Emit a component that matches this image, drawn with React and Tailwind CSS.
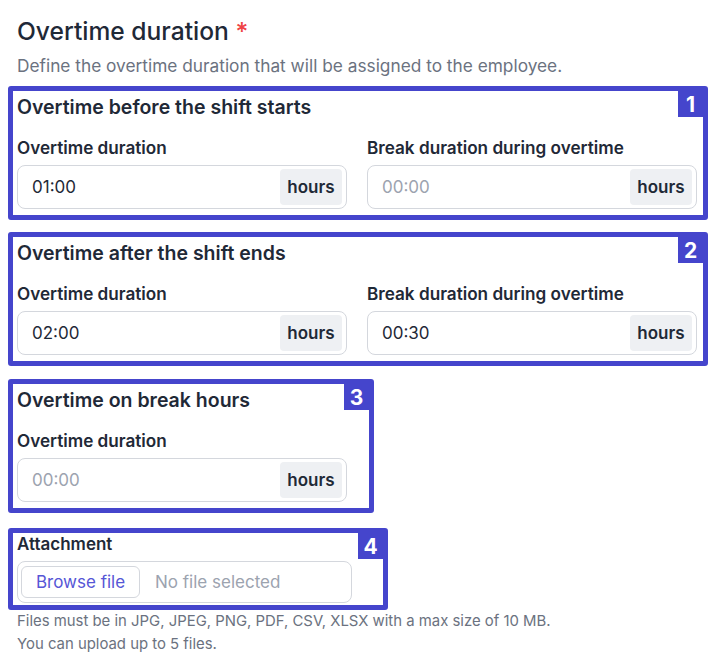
import React from "react";

const font = { fontFamily: "Inter, 'Noto Sans', sans-serif" };

function Badge({ n }) {
  return (
    <div className="absolute right-0 top-0 flex h-[26px] w-[25px] items-center justify-center bg-[#4545cc] text-[21px] font-bold leading-none text-white">
      {n}
    </div>
  );
}

function DurationInput({ value, placeholder }) {
  return (
    <div className="flex h-[44px] w-[330px] items-center rounded-lg border border-[#d4d7dd] bg-white pl-[14px] pr-[4px]">
      <span className={"flex-1 pt-[2px] text-[17px] " + (value ? "text-[#1f2937]" : "text-[#9ca3af]")}>
        {value || placeholder}
      </span>
      <span className="flex h-[36px] w-[62px] items-center justify-center rounded bg-[#eef0f3] pt-[2px] text-[17px] font-semibold text-[#1f2937]">
        hours
      </span>
    </div>
  );
}

function Field({ label, value, placeholder }) {
  return (
    <div className="flex flex-col">
      <div className="text-[17.15px] font-semibold leading-6 text-[#1f2937]">{label}</div>
      <div className="mt-[5px]">
        <DurationInput value={value} placeholder={placeholder} />
      </div>
    </div>
  );
}

function Section({ n, title, fields, className }) {
  return (
    <div className={"relative rounded-[3px] border-[5px] border-[#4545cc] pb-[6px] pl-[4px] pt-[4px] " + className}>
      <Badge n={n} />
      <div className="text-[19.5px] font-semibold leading-6 text-[#1f2937]">{title}</div>
      <div className="mt-[17px] flex gap-[20px]">
        {fields.map((f, i) => (
          <Field key={i} {...f} />
        ))}
      </div>
    </div>
  );
}

export default function App() {
  return (
    <div className="min-h-[667px] w-[719px] bg-white px-[8px] pt-[15px]" style={font}>
      <div className="pl-[9px]">
        <div className="text-[24.6px] font-medium leading-8 text-[#1f2937]">
          Overtime duration <span className="text-[#ef4444]">*</span>
        </div>
        <div className="mt-[7px] text-[17.3px] leading-6 text-[#6b7280]">
          Define the overtime duration that will be assigned to the employee.
        </div>
      </div>

      <Section
        n={1}
        title="Overtime before the shift starts"
        className="mt-[8px] w-[700px]"
        fields={[
          { label: "Overtime duration", value: "01:00" },
          { label: "Break duration during overtime", placeholder: "00:00" },
        ]}
      />
      <Section
        n={2}
        title="Overtime after the shift ends"
        className="mt-[12px] w-[700px]"
        fields={[
          { label: "Overtime duration", value: "02:00" },
          { label: "Break duration during overtime", value: "00:30" },
        ]}
      />
      <Section
        n={3}
        title="Overtime on break hours"
        className="mt-[13px] w-[366px]"
        fields={[{ label: "Overtime duration", placeholder: "00:00" }]}
      />

      <div className="relative mt-[15px] w-[380px] rounded-[3px] border-[5px] border-[#4545cc] pb-[2px] pl-[4px] pt-[1px]">
        <Badge n={4} />
        <div className="text-[17px] font-semibold leading-5 text-[#1f2937]">Attachment</div>
        <div className="mt-[7px] flex h-[42px] w-[335px] items-center rounded-lg border border-[#d4d7dd] bg-white pl-[3px]">
          <div className="flex h-[32px] w-[119px] items-center justify-center rounded-md border border-[#d4d7dd] pt-[1px] text-[17px] text-[#5656d6]">
            Browse file
          </div>
          <div className="ml-[15px] pt-[1px] text-[17px] text-[#9ca3af]">No file selected</div>
        </div>
      </div>

      <div className="pl-[9px] text-[14.9px] leading-[23px] text-[#6b7280]">
        <div>Files must be in JPG, JPEG, PNG, PDF, CSV, XLSX with a max size of 10 MB.</div>
        <div>You can upload up to 5 files.</div>
      </div>
    </div>
  );
}
